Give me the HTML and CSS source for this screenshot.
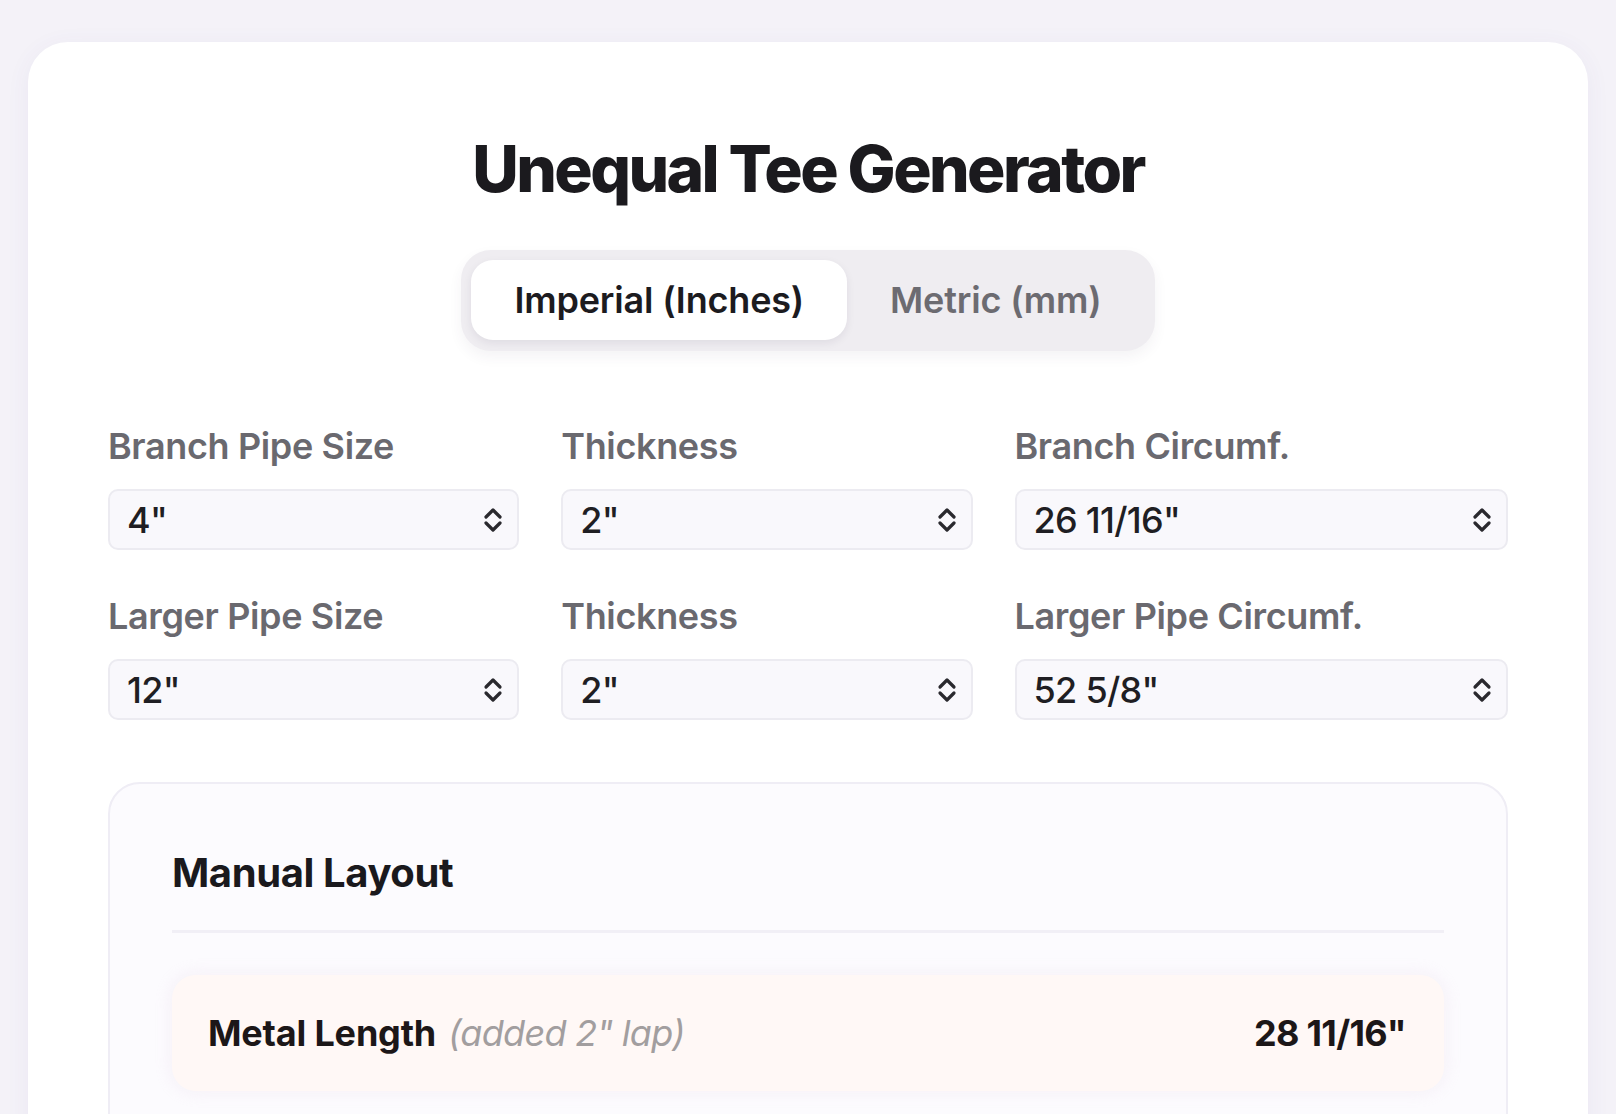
FILE: index.html
```html
<!DOCTYPE html>
<html lang="en">
<head>
<meta charset="utf-8">
<title>Unequal Tee Generator</title>
<link rel="stylesheet" href="styles.css">
</head>
<body>
<div class="page">
  <main class="card">
    <h1 class="title">Unequal Tee Generator</h1>
    <div class="toggle-wrap">
      <div class="toggle">
        <button class="toggle-btn active">Imperial (Inches)</button>
        <button class="toggle-btn">Metric (mm)</button>
      </div>
    </div>

    <div class="grid">
      <div class="field">
        <label class="label">Branch Pipe Size</label>
        <div class="select"><span class="value">4"</span>
          <svg class="chev" viewBox="0 0 20 26"><path d="M3 10 L10 3 L17 10 M3 16 L10 23 L17 16"/></svg></div>
      </div>
      <div class="field">
        <label class="label">Thickness</label>
        <div class="select"><span class="value">2"</span>
          <svg class="chev" viewBox="0 0 20 26"><path d="M3 10 L10 3 L17 10 M3 16 L10 23 L17 16"/></svg></div>
      </div>
      <div class="field">
        <label class="label">Branch Circumf.</label>
        <div class="select"><span class="value">26 11/16"</span>
          <svg class="chev" viewBox="0 0 20 26"><path d="M3 10 L10 3 L17 10 M3 16 L10 23 L17 16"/></svg></div>
      </div>
      <div class="field">
        <label class="label">Larger Pipe Size</label>
        <div class="select"><span class="value">12"</span>
          <svg class="chev" viewBox="0 0 20 26"><path d="M3 10 L10 3 L17 10 M3 16 L10 23 L17 16"/></svg></div>
      </div>
      <div class="field">
        <label class="label">Thickness</label>
        <div class="select"><span class="value">2"</span>
          <svg class="chev" viewBox="0 0 20 26"><path d="M3 10 L10 3 L17 10 M3 16 L10 23 L17 16"/></svg></div>
      </div>
      <div class="field">
        <label class="label">Larger Pipe Circumf.</label>
        <div class="select"><span class="value">52 5/8"</span>
          <svg class="chev" viewBox="0 0 20 26"><path d="M3 10 L10 3 L17 10 M3 16 L10 23 L17 16"/></svg></div>
      </div>
    </div>

    <section class="panel">
      <h2 class="panel-title">Manual Layout</h2>
      <div class="result">
        <div class="result-name">Metal Length <span class="note">(added 2" lap)</span></div>
        <div class="result-value">28 11/16"</div>
      </div>
    </section>
  </main>
</div>
</body>
</html>
```

FILE: styles.css
```css
html, body {
  margin: 0;
  padding: 0;
}
body {
  background: #f4f2f8;
  font-family: Inter, "Noto Sans", "Liberation Sans", sans-serif;
  color: #1c1b1f;
  height: 1114px;
  overflow: hidden;
}
.page {
  padding: 42px 28px 0;
}
.card {
  background: #ffffff;
  border-radius: 40px;
  padding: 85px 80px 80px;
  min-height: 1200px;
  box-shadow: 0 4px 24px rgba(90, 70, 150, 0.06);
}
.title {
  margin: 0;
  text-align: center;
  font-size: 64px;
  line-height: 1.3;
  font-weight: 800;
  letter-spacing: -0.04em;
  color: #1b1a1e;
}
.toggle-wrap {
  display: flex;
  justify-content: center;
  margin-top: 40px;
}
.toggle {
  display: inline-flex;
  background: #efedf1;
  border-radius: 30px;
  padding: 10px 10px 11px;
  box-shadow: 0 6px 14px rgba(60, 50, 90, 0.06);
}
.toggle-btn {
  border: 0;
  background: transparent;
  height: 80px;
  padding: 0 43px;
  border-radius: 22px;
  font-family: inherit;
  font-size: 36px;
  font-weight: 600;
  color: #6c6b71;
  letter-spacing: -0.005em;
}
.toggle-btn.active {
  background: #ffffff;
  color: #1c1b1f;
  box-shadow: 0 3px 8px rgba(40, 30, 70, 0.08);
}
.grid {
  display: grid;
  grid-template-columns: 1fr 1fr 1.2fr;
  column-gap: 42px;
  row-gap: 39px;
  margin-top: 68px;
}
.label {
  display: block;
  font-size: 36px;
  line-height: 54px;
  font-weight: 600;
  color: #6a696f;
  margin-bottom: 16px;
  letter-spacing: -0.01em;
}
.select {
  box-sizing: border-box;
  height: 61px;
  border: 2px solid #ecebf1;
  border-radius: 10px;
  background: #f9f8fc;
  display: flex;
  align-items: center;
  justify-content: space-between;
  padding: 0 14px 0 17px;
}
.value {
  font-size: 36px;
  font-weight: 500;
  color: #1f1e23;
  letter-spacing: -0.02em;
}
.chev {
  width: 20px;
  height: 26px;
  fill: none;
  stroke: #2a292e;
  stroke-width: 3.2;
  stroke-linecap: round;
  stroke-linejoin: round;
}
.panel {
  margin-top: 62px;
  border: 2px solid #efedf5;
  border-radius: 32px;
  background: #fcfbfe;
  padding: 65px 62px 62px;
}
.panel-title {
  margin: 0;
  font-size: 40px;
  line-height: 48px;
  font-weight: 700;
  color: #1a191d;
  padding-bottom: 33px;
  border-bottom: 3px solid #f1eff6;
  letter-spacing: -0.01em;
}
.result {
  margin-top: 42px;
  background: #fff8f6;
  border-radius: 24px;
  padding: 32px 38px 32px 36px;
  display: flex;
  justify-content: space-between;
  align-items: center;
  line-height: 52px;
  box-shadow: 0 0 18px rgba(240, 230, 240, 0.6);
}
.result-name {
  font-size: 36px;
  font-weight: 700;
  color: #1c1718;
  letter-spacing: -0.005em;
}
.note {
  font-weight: 400;
  font-style: italic;
  color: #a29e9f;
  margin-left: 4px;
  letter-spacing: -0.02em;
}
.result-value {
  font-size: 36px;
  font-weight: 700;
  color: #1c1718;
  letter-spacing: -0.02em;
}
```
